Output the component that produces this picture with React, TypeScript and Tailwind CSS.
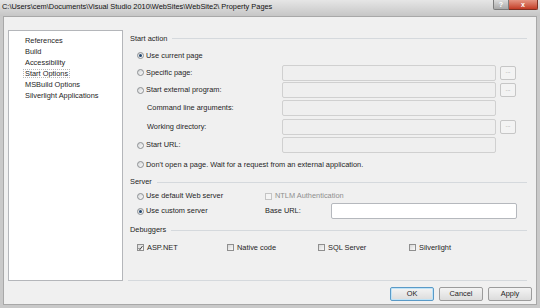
import React from 'react';

function Radio({ checked = false }: { checked?: boolean }) {
  return (
    <span className="flex h-[7px] w-[7px] shrink-0 items-center justify-center rounded-full border border-[#8d9093] bg-gradient-to-br from-[#d4d6d8] to-[#fbfbfb]">
      {checked && <span className="h-[3px] w-[3px] rounded-full bg-[#22476f]" />}
    </span>
  );
}

function Check({ checked = false, disabled = false }: { checked?: boolean; disabled?: boolean }) {
  return (
    <span
      className={`flex h-[7px] w-[7px] shrink-0 items-center justify-center border ${
        disabled ? 'border-[#c4c4c4] bg-[#f4f4f4]' : 'border-[#8f8f8f] bg-gradient-to-br from-[#d8d8d8] to-[#fafafa]'
      }`}
    >
      {checked && (
        <svg width="6" height="6" viewBox="0 0 6 6">
          <path d="M0.8 3.2 L2.3 4.8 L5.3 0.8" fill="none" stroke="#2b2b2b" strokeWidth="1.1" />
        </svg>
      )}
    </span>
  );
}

function TextBox({ white = false, width = 'w-[214px]' }: { white?: boolean; width?: string }) {
  return (
    <div
      className={`h-[16px] ${width} shrink-0 rounded-[2px] border ${
        white ? 'border-[#b5b8bd] bg-white' : 'border-[#d0d0d0] bg-[#efefef]'
      }`}
    />
  );
}

function Dots() {
  return (
    <div className="ml-[4px] flex h-[14px] w-[16px] shrink-0 items-center justify-center rounded-[2px] border border-[#c6c6c6] bg-[#f3f3f3] pb-[3px] text-[6px] leading-none text-[#8a8a8a]">
      ...
    </div>
  );
}

function GroupHeader({ label, h }: { label: string; h: string }) {
  return (
    <div className={`flex ${h} items-center pl-[2px]`}>
      <span>{label}</span>
      <div className="ml-[5px] h-px flex-1 bg-[#d5d9dd]" />
    </div>
  );
}

function RadioRow({ label, checked, h, children }: { label: string; checked?: boolean; h: string; children?: React.ReactNode }) {
  return (
    <div className={`flex ${h} items-center`}>
      <div className="flex w-[154px] shrink-0 items-center pl-[9px]">
        <Radio checked={checked} />
        <span className="ml-[2px] whitespace-nowrap">{label}</span>
      </div>
      {children}
    </div>
  );
}

function Btn({ label, primary = false }: { label: string; primary?: boolean }) {
  return (
    <div
      className={`flex h-[14px] w-[44px] items-center justify-center rounded-[2px] border bg-gradient-to-b from-[#f4f4f4] to-[#dcdcdc] ${
        primary ? 'border-[#5a9ac7] shadow-[inset_0_0_0_1px_#bfe3f7]' : 'border-[#9c9c9c]'
      }`}
    >
      {label}
    </div>
  );
}

const navItems = ['References', 'Build', 'Accessibility', 'Start Options', 'MSBuild Options', 'Silverlight Applications'];

export default function App() {
  return (
    <div className="flex h-[308px] w-[540px] flex-col overflow-hidden bg-[#c9c9c9] font-['Liberation_Sans',Arial,sans-serif] text-[7.4px] leading-none text-[#1e1e1e]">
      {/* title bar */}
      <div className="relative flex h-[16px] shrink-0 bg-gradient-to-b from-[#e6e6e6] to-[#c6c6c6]">
        <span className="pl-[2px] pt-[2px] text-[7.4px] leading-[9px] text-[#111]">
          C:\Users\cem\Documents\Visual Studio 2010\WebSites\WebSite2\ Property Pages
        </span>
        <div className="absolute right-[2px] top-0 flex">
          <div className="flex h-[10px] w-[16px] items-center justify-center rounded-bl-[2px] border border-t-0 border-[#7c7c7c] bg-gradient-to-b from-[#dcdcdc] to-[#a9a9a9] text-[7px] font-bold text-white">
            ?
          </div>
          <div className="flex h-[10px] w-[29px] items-center justify-center rounded-br-[2px] border border-l-0 border-t-0 border-[#7e2f22] bg-gradient-to-b from-[#e49482] to-[#c23a24] text-[7px] font-bold text-white">
            x
          </div>
        </div>
      </div>

      {/* client area */}
      <div className="mx-[3px] mb-[3px] flex flex-1 flex-col border border-[#a8a8a8] bg-[#f0f0f0] pl-[4px] pr-[3px] pt-[13px]">
        <div className="flex h-[251px]">
          {/* left list */}
          <div className="w-[115px] shrink-0 border border-[#b4b6ba] bg-white pl-[16px] pt-[4px]">
            {navItems.map((item) => (
              <div key={item} className="flex h-[11px] items-center">
                <span className={item === 'Start Options' ? 'outline outline-1 outline-dotted outline-[#b8b8b8] px-px -mx-px' : ''}>
                  {item}
                </span>
              </div>
            ))}
          </div>

          {/* right settings */}
          <div className="ml-[5px] flex w-[399px] flex-col border-b border-[#d5d9dd]">
            <GroupHeader label="Start action" h="h-[17px]" />
            <RadioRow label="Use current page" checked h="h-[17px]" />
            <RadioRow label="Specific page:" h="h-[17px]">
              <TextBox />
              <Dots />
            </RadioRow>
            <RadioRow label="Start external program:" h="h-[18px]">
              <TextBox />
              <Dots />
            </RadioRow>
            <div className="flex h-[18px] items-center">
              <span className="w-[154px] shrink-0 pl-[19px]">Command line arguments:</span>
              <TextBox />
            </div>
            <div className="flex h-[19px] items-center">
              <span className="w-[154px] shrink-0 pl-[19px]">Working directory:</span>
              <TextBox />
              <Dots />
            </div>
            <RadioRow label="Start URL:" h="h-[18px]">
              <TextBox />
            </RadioRow>
            <RadioRow label="Don't open a page. Wait for a request from an external application." h="h-[21px]" />

            <GroupHeader label="Server" h="h-[14px]" />
            <div className="flex h-[14px] items-center">
              <div className="flex w-[137px] shrink-0 items-center pl-[9px]">
                <Radio />
                <span className="ml-[2px]">Use default Web server</span>
              </div>
              <Check disabled />
              <span className="ml-[3px] text-[#8e8e8e]">NTLM Authentication</span>
            </div>
            <div className="flex h-[16px] items-center">
              <div className="flex w-[137px] shrink-0 items-center pl-[9px]">
                <Radio checked />
                <span className="ml-[2px]">Use custom server</span>
              </div>
              <span className="w-[66px] shrink-0">Base URL:</span>
              <TextBox white width="w-[186px]" />
            </div>

            <GroupHeader label="Debuggers" h="h-[22px]" />
            <div className="flex h-[13px] items-center">
              {[
                { label: 'ASP.NET', checked: true },
                { label: 'Native code' },
                { label: 'SQL Server' },
                { label: 'Silverlight' },
              ].map((d, i) => (
                <div key={d.label} className={`flex items-center ${i === 0 ? 'w-[99px] pl-[9px]' : 'w-[91px]'}`}>
                  <Check checked={d.checked} />
                  <span className="ml-[3px]">{d.label}</span>
                </div>
              ))}
            </div>
          </div>
        </div>

        {/* footer buttons */}
        <div className="mt-[6px] flex justify-end gap-[5px] pr-[1px]">
          <Btn label="OK" primary />
          <Btn label="Cancel" />
          <Btn label="Apply" />
        </div>
      </div>
    </div>
  );
}
